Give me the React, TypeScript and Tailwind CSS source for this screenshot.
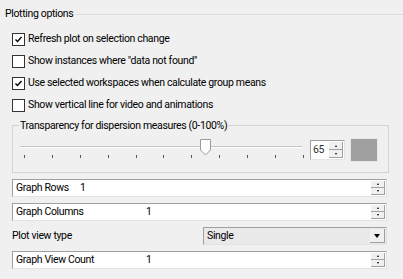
import React from "react";

function CheckBox({ checked }: { checked: boolean }) {
  return (
    <span className="w-[13px] h-[13px] border border-[#333] bg-white flex items-center justify-center shrink-0">
      {checked && (
        <svg width="9" height="9" viewBox="0 0 9 9">
          <path d="M1.5 4.5 L3.5 6.5 L7.5 2" stroke="#000" strokeWidth="1.4" fill="none" />
        </svg>
      )}
    </span>
  );
}

function SpinButtons() {
  return (
    <div className="flex flex-col w-[14px] h-full shrink-0">
      <div className="flex-1 flex items-center justify-center bg-[#f0f0f0] border-b border-r border-b-[#a0a0a0] border-r-[#a0a0a0]">
        <span className="w-0 h-0 border-x-[1.5px] border-x-transparent border-b-[2px] border-b-black" />
      </div>
      <div className="flex-1 flex items-center justify-center bg-[#f0f0f0] border-b border-r border-b-[#a0a0a0] border-r-[#a0a0a0]">
        <span className="w-0 h-0 border-x-[1.5px] border-x-transparent border-t-[2px] border-t-black" />
      </div>
    </div>
  );
}

function SpinRow({ label, value, labelWidth }: { label: string; value: string; labelWidth: string }) {
  return (
    <div className="ml-[12px] w-[375px] h-[18px] flex items-stretch bg-white border-t border-l border-t-[#a0a0a0] border-l-[#a0a0a0] border-b border-r border-b-[#e3e3e3] border-r-[#e3e3e3]">
      <div className="flex-1 flex items-center pl-[3px]">
        <span className={labelWidth}>{label}</span>
        <span>{value}</span>
      </div>
      <div className="py-[1px] pr-[1px]">
        <SpinButtons />
      </div>
    </div>
  );
}

const options = [
  { label: "Refresh plot on selection change", checked: true },
  { label: 'Show instances where "data not found"', checked: false },
  { label: "Use selected workspaces when calculate group means", checked: true },
  { label: "Show vertical line for video and animations", checked: false },
];

export default function App() {
  const ticks = Array.from({ length: 11 });

  return (
    <div className="w-[403px] h-[279px] bg-[#f0f0f0] overflow-hidden text-[10.5px] tracking-[-0.35px] leading-none text-black font-['Roboto',Arial,sans-serif]">
      {/* Group title */}
      <div className="flex items-center h-[28px] pl-[5px]">
        <span>Plotting options</span>
        <div className="flex-1 h-px bg-[#dcdcdc] ml-[3px]" />
      </div>

      {/* Checkboxes */}
      <div className="flex flex-col pl-[12px]">
        {options.map((o) => (
          <div key={o.label} className="flex items-center gap-[2px] h-[22px]">
            <CheckBox checked={o.checked} />
            <span className="ml-[1px]">{o.label}</span>
          </div>
        ))}
      </div>

      {/* Transparency group */}
      <fieldset className="ml-[12px] mt-[3px] w-[377px] h-[54px] border border-[#d3d3d3] px-[7px]">
        <legend className="-ml-[1px] px-[1px] leading-[13px]">Transparency for dispersion measures (0-100%)</legend>
        <div className="flex items-start mt-[6px]">
          <div className="relative w-[282px] h-[24px]">
            <div className="absolute left-0 right-0 top-[8px] h-[2px] bg-[#c4c4c4] border-b border-b-white" />
            <svg className="absolute left-[180px] top-[1px]" width="11" height="17" viewBox="0 0 11 17">
              <path d="M0.5 0.5 H10.5 V11 L5.5 16 L0.5 11 Z" fill="#fdfdfd" stroke="#9a9a9a" />
            </svg>
            <div className="absolute left-[4px] right-[-2px] top-[17px] flex justify-between">
              {ticks.map((_, i) => (
                <span key={i} className="w-px h-[3px] bg-[#555]" />
              ))}
            </div>
          </div>
          <div className="ml-[8px] mt-[2px] w-[35px] h-[20px] flex items-stretch bg-white border-t border-l border-t-[#a0a0a0] border-l-[#a0a0a0] border-b border-r border-b-[#e3e3e3] border-r-[#e3e3e3]">
            <div className="flex-1 flex items-center pl-[2px] text-[#333]">65</div>
            <div className="py-[1px] pr-[1px]">
              <SpinButtons />
            </div>
          </div>
          <div className="ml-[5px] w-[28px] h-[24px] bg-[#a0a0a0] border border-[#e8e8e8]" />
        </div>
      </fieldset>

      <div className="mt-[6px] flex flex-col">
        <SpinRow label="Graph Rows" value="1" labelWidth="w-[64px]" />
        <div className="mt-[6px]">
          <SpinRow label="Graph Columns" value="1" labelWidth="w-[130px]" />
        </div>

        {/* Plot view type */}
        <div className="mt-[6px] flex items-center h-[18px] pl-[12px]">
          <span className="w-[191px]">Plot view type</span>
          <div className="w-[184px] h-full flex items-stretch bg-[#e9e9e9] border-t border-l border-t-[#a0a0a0] border-l-[#a0a0a0] border-b border-r border-b-[#e3e3e3] border-r-[#e3e3e3]">
            <div className="flex-1 flex items-center pl-[3px]">Single</div>
            <div className="py-[1px] pr-[1px]">
              <div className="w-[15px] h-full flex items-center justify-center bg-[#f0f0f0] border-b border-r border-b-[#a0a0a0] border-r-[#a0a0a0]">
                <span className="w-0 h-0 border-x-[3.5px] border-x-transparent border-t-[4px] border-t-black" />
              </div>
            </div>
          </div>
        </div>

        <div className="mt-[6px]">
          <SpinRow label="Graph View Count" value="1" labelWidth="w-[130px]" />
        </div>
      </div>
    </div>
  );
}
